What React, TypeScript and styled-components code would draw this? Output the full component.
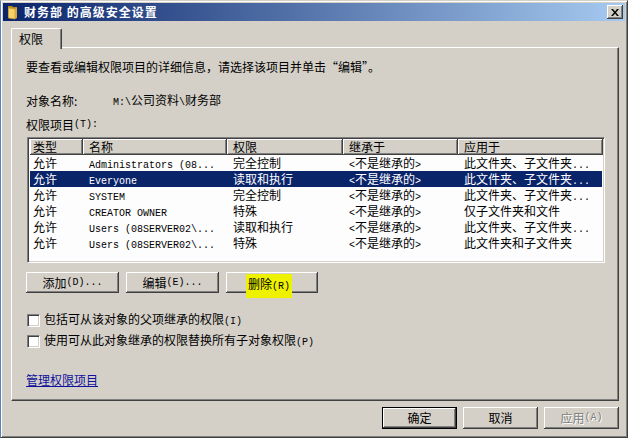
import React from "react";
import styled, { createGlobalStyle, css } from "styled-components";

const CJK = `"Noto Sans CJK SC", "Liberation Sans", sans-serif`;
const MONO = `"Liberation Mono", "Noto Sans CJK SC", monospace`;

const Global = createGlobalStyle`
  html, body { margin: 0; padding: 0; background: #ffffff; }
  body { font-family: ${CJK}; font-size: 12px; color: #000; }
  * { box-sizing: border-box; }
`;

const raised = css`
  background: #d4d0c8;
  box-shadow: inset -1px -1px #404040, inset 1px 1px #ffffff, inset -2px -2px #808080;
`;

const Window = styled.div`
  width: 628px;
  height: 438px;
  background: #d4d0c8;
  border: 1px solid;
  border-color: #d4d0c8 #404040 #404040 #5b7fb8;
  box-shadow: inset 1px 1px #ffffff, inset -1px -1px #808080;
  padding: 2px;
  display: flex;
  flex-direction: column;
`;

const TitleBar = styled.div`
  height: 18px;
  display: flex;
  align-items: center;
  padding: 0 2px;
  background: linear-gradient(to right, #0a246a, #a6caf0);
`;

const TitleText = styled.span`
  margin-left: 3px;
  color: #ffffff;
  font-weight: bold;
  font-size: 12px;
  letter-spacing: 1px;
  line-height: 14px;
  white-space: pre;
`;

const CloseButton = styled.div`
  ${raised};
  margin-left: auto;
  width: 16px;
  height: 14px;
  display: flex;
  align-items: center;
  justify-content: center;
`;

const Body = styled.div`
  padding: 7px 6px 0 8px;
  display: flex;
  flex-direction: column;
`;

const TabStrip = styled.div`
  display: flex;
  height: 19px;
`;

const Tab = styled.div`
  position: relative;
  z-index: 1;
  width: 51px;
  height: 21px;
  padding: 3px 0 0 7px;
  line-height: 14px;
  background: #d4d0c8;
  border-top: 1px solid #ffffff;
  border-left: 1px solid #ffffff;
  border-right: 1px solid #404040;
  border-radius: 2px 2px 0 0;
  box-shadow: inset -1px 0 #808080;
`;

const Panel = styled.div`
  height: 354px;
  border-top: 1px solid #ffffff;
  border-left: 1px solid #ffffff;
  border-right: 1px solid #404040;
  border-bottom: 1px solid #404040;
  box-shadow: inset -1px -1px #808080;
  padding: 12px 12px 0 14px;
  display: flex;
  flex-direction: column;
`;

const Line = styled.div<{ $mt: number }>`
  margin-top: ${(p) => p.$mt}px;
  line-height: 14px;
  height: 14px;
  white-space: pre;
  display: flex;
  align-items: center;
`;

const FieldLabel = styled.span`
  width: 87px;
`;

const L = styled.span`
  font-family: ${MONO};
  font-size: 10px;
`;

const ListBox = styled.div`
  margin-top: 5px;
  margin-left: 1px;
  width: 578px;
  height: 126px;
  background: #fdfdfd;
  border: 1px solid;
  border-color: #808080 #ffffff #ffffff #808080;
  box-shadow: inset 1px 1px #404040, inset -1px -1px #d4d0c8;
  padding: 1px 2px 2px 2px;
`;

const COLS = "53px 144px 116px 115px 145px";

const HeaderRow = styled.div`
  display: grid;
  grid-template-columns: ${COLS};
  height: 16px;
`;

const HeaderCell = styled.div<{ $first?: boolean }>`
  ${raised};
  padding-left: ${(p) => (p.$first ? 3 : 6)}px;
  line-height: 15px;
  white-space: nowrap;
  overflow: hidden;
`;

const Row = styled.div<{ $sel?: boolean }>`
  display: grid;
  grid-template-columns: ${COLS};
  height: 16px;
  line-height: 16px;
  background: ${(p) => (p.$sel ? "#0a246a" : "transparent")};
  color: ${(p) => (p.$sel ? "#ffffff" : "#000000")};
`;

const Cell = styled.div<{ $first?: boolean }>`
  padding-left: ${(p) => (p.$first ? 3 : 6)}px;
  white-space: pre;
  overflow: hidden;
`;

const ButtonRow = styled.div`
  margin-top: 9px;
  display: flex;
  gap: 7px;
`;

const Button = styled.div<{ $w: number; $h: number; $default?: boolean; $disabled?: boolean }>`
  ${raised};
  width: ${(p) => p.$w}px;
  height: ${(p) => p.$h}px;
  display: flex;
  align-items: center;
  justify-content: center;
  white-space: pre;
  line-height: 14px;
  color: ${(p) => (p.$disabled ? "#808080" : "#000")};
  text-shadow: ${(p) => (p.$disabled ? "1px 1px #ffffff" : "none")};
  ${(p) =>
    p.$default &&
    css`
      border: 1px solid #000000;
    `}
`;

const Highlight = styled.span`
  background: #eef200;
  padding: 3px 2px 4px 2px;
  margin-top: 6px;
  margin-right: 6px;
`;

const CheckRow = styled.div<{ $mt: number }>`
  margin-top: ${(p) => p.$mt}px;
  margin-left: 1px;
  display: flex;
  align-items: center;
  gap: 4px;
  height: 14px;
  line-height: 14px;
  white-space: pre;
`;

const CheckBox = styled.span`
  width: 13px;
  height: 13px;
  background: #ffffff;
  border: 1px solid;
  border-color: #808080 #ffffff #ffffff #808080;
  box-shadow: inset 1px 1px #404040, inset -1px -1px #d4d0c8;
`;

const Link = styled.a`
  margin-top: 25px;
  line-height: 14px;
  color: #10109c;
  text-decoration: underline;
  width: max-content;
`;

const Footer = styled.div`
  margin-top: 6px;
  display: flex;
  justify-content: flex-end;
  gap: 6px;
`;

const FolderIcon = () => (
  <svg width="16" height="16" viewBox="0 0 16 16">
    <path d="M3 2 L7 2 L8 3 L12 3 L12 14 L3 14 Z" fill="#b88a20" />
    <path d="M3.5 4 L10 5 L10 15 L3.5 14 Z" fill="#f5d36a" stroke="#c89a30" strokeWidth="0.8" />
    <path d="M10 5 L12 4 L12 14 L10 15 Z" fill="#d8ac3c" />
  </svg>
);

const CloseGlyph = () => (
  <svg width="8" height="7" viewBox="0 0 8 7">
    <path d="M0 0 L2 0 L4 2.5 L6 0 L8 0 L5 3.5 L8 7 L6 7 L4 4.5 L2 7 L0 7 L3 3.5 Z" fill="#000" />
  </svg>
);

const Dots = () => <L>...</L>;

type RowData = { name: string; perm: string; apply: React.ReactNode; sel?: boolean };

const rows: RowData[] = [
  { name: "Administrators (08...", perm: "完全控制", apply: <>此文件夹、子文件夹<Dots /></> },
  { name: "Everyone", perm: "读取和执行", apply: <>此文件夹、子文件夹<Dots /></>, sel: true },
  { name: "SYSTEM", perm: "完全控制", apply: <>此文件夹、子文件夹<Dots /></> },
  { name: "CREATOR OWNER", perm: "特殊", apply: "仅子文件夹和文件" },
  { name: "Users (08SERVER02\\...", perm: "读取和执行", apply: <>此文件夹、子文件夹<Dots /></> },
  { name: "Users (08SERVER02\\...", perm: "特殊", apply: "此文件夹和子文件夹" },
];

export default function App() {
  return (
    <>
      <Global />
      <Window>
        <TitleBar>
          <FolderIcon />
          <TitleText>财务部 的高级安全设置</TitleText>
          <CloseButton>
            <CloseGlyph />
          </CloseButton>
        </TitleBar>
        <Body>
          <TabStrip>
            <Tab>权限</Tab>
          </TabStrip>
          <Panel>
            <Line $mt={0}>要查看或编辑权限项目的详细信息，请选择该项目并单击“编辑”。</Line>
            <Line $mt={20}>
              <FieldLabel>对象名称:</FieldLabel>
              <span>
                <L>M:\</L>公司资料<L>\</L>财务部
              </span>
            </Line>
            <Line $mt={10}>
              权限项目<L>(T):</L>
            </Line>
            <ListBox>
              <HeaderRow>
                <HeaderCell $first>类型</HeaderCell>
                <HeaderCell>名称</HeaderCell>
                <HeaderCell>权限</HeaderCell>
                <HeaderCell>继承于</HeaderCell>
                <HeaderCell>应用于</HeaderCell>
              </HeaderRow>
              {rows.map((r, i) => (
                <Row key={i} $sel={r.sel}>
                  <Cell $first>允许</Cell>
                  <Cell>
                    <L>{r.name}</L>
                  </Cell>
                  <Cell>{r.perm}</Cell>
                  <Cell>
                    <L>&lt;</L>不是继承的<L>&gt;</L>
                  </Cell>
                  <Cell>{r.apply}</Cell>
                </Row>
              ))}
            </ListBox>
            <ButtonRow>
              <Button $w={93} $h={21}>
                添加<L>(D)...</L>
              </Button>
              <Button $w={93} $h={21}>
                编辑<L>(E)...</L>
              </Button>
              <Button $w={92} $h={21}>
                <Highlight>
                  删除<L>(R)</L>
                </Highlight>
              </Button>
            </ButtonRow>
            <CheckRow $mt={20}>
              <CheckBox />
              <span>
                包括可从该对象的父项继承的权限<L>(I)</L>
              </span>
            </CheckRow>
            <CheckRow $mt={7}>
              <CheckBox />
              <span>
                使用可从此对象继承的权限替换所有子对象权限<L>(P)</L>
              </span>
            </CheckRow>
            <Link>管理权限项目</Link>
          </Panel>
          <Footer>
            <Button $w={75} $h={22} $default>
              确定
            </Button>
            <Button $w={75} $h={22}>
              取消
            </Button>
            <Button $w={75} $h={22} $disabled>
              应用<L>(A)</L>
            </Button>
          </Footer>
        </Body>
      </Window>
    </>
  );
}
